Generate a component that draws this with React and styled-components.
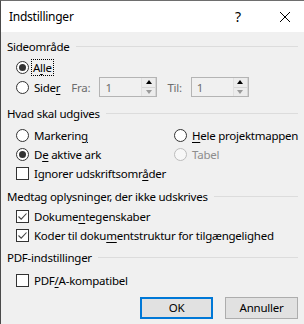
import React from "react";
import styled, { createGlobalStyle } from "styled-components";

const Global = createGlobalStyle`
  html, body { margin: 0; padding: 0; background: #f0f0f0; }
  body {
    font-family: "Noto Sans", "Open Sans", sans-serif;
    font-size: 11.5px;
    letter-spacing: -0.25px;
    color: #000;
  }
  * { box-sizing: border-box; }
`;

const Window = styled.div`
  width: 304px;
  height: 324px;
  border-top: 1px solid #6e6e6e;
  border-left: 1px solid #4a4a4a;
  background: #f0f0f0;
  display: flex;
  flex-direction: column;
  overflow: hidden;
`;

const TitleBar = styled.div`
  height: 31px;
  background: #fff;
  display: flex;
  align-items: center;
  padding-left: 8px;
  flex-shrink: 0;
`;

const Title = styled.div`
  flex: 1;
  font-size: 12px;
  line-height: 16px;
`;

const Help = styled.div`
  width: 14px;
  font-size: 14px;
  line-height: 16px;
  margin-right: 34px;
  text-align: center;
`;

const Close = styled.div`
  width: 12px;
  height: 12px;
  margin-right: 13px;
  display: flex;
`;

const Body = styled.div`
  display: flex;
  flex-direction: column;
  padding: 0 6px 0 6px;
`;

const Heading = styled.div`
  display: flex;
  align-items: center;
  height: 16px;
  margin-top: ${(p) => p.$mt}px;
  white-space: nowrap;
  line-height: 16px;
  &::after {
    content: "";
    flex: 1;
    height: 1px;
    background: #dcdcdc;
    margin-left: 6px;
    margin-top: -1px;
  }
`;

const Rows = styled.div`
  display: flex;
  flex-direction: column;
  padding-left: 9px;
  margin-top: ${(p) => p.$mt}px;
`;

const Row = styled.div`
  display: flex;
  align-items: center;
  height: ${(p) => p.$h || 19}px;
  white-space: nowrap;
`;

const Grid = styled.div`
  display: grid;
  grid-template-columns: 158px 1fr;
  grid-auto-rows: 19px;
  padding-left: 9px;
  margin-top: ${(p) => p.$mt}px;
`;

const Cell = styled.div`
  display: flex;
  align-items: center;
  white-space: nowrap;
  grid-column: ${(p) => (p.$span ? "1 / span 2" : "auto")};
`;

const RadioCircle = styled.span`
  width: 13px;
  height: 13px;
  border-radius: 50%;
  border: 1px solid ${(p) => (p.$disabled ? "#bcbcbc" : "#333")};
  background: ${(p) => (p.$disabled ? "#f7f7f7" : "#fff")};
  display: flex;
  align-items: center;
  justify-content: center;
  flex-shrink: 0;
  &::after {
    content: "";
    width: 7px;
    height: 7px;
    border-radius: 50%;
    background: #333;
    display: ${(p) => (p.$checked ? "block" : "none")};
  }
`;

const Box = styled.span`
  width: 13px;
  height: 13px;
  border: 1px solid #333;
  background: #fff;
  display: flex;
  align-items: center;
  justify-content: center;
  flex-shrink: 0;
`;

const Label = styled.span`
  margin-left: ${(p) => p.$ml ?? 4}px;
  line-height: 15px;
  color: ${(p) => (p.$disabled ? "#8d8d8d" : "#000")};
  padding: 0 1px;
  border: 1px ${(p) => (p.$focus ? "dotted #000" : "solid transparent")};
`;

const U = styled.span`
  text-decoration: underline;
  text-underline-offset: 2px;
`;

const Dim = styled.span`
  color: #6d6d6d;
  margin-left: ${(p) => p.$ml}px;
`;

const Spin = styled.div`
  width: 58px;
  height: 20px;
  margin-left: ${(p) => p.$ml}px;
  border: 1px solid #b4b4b4;
  background: #f0f0f0;
  display: flex;
`;

const SpinText = styled.div`
  flex: 1;
  color: #6d6d6d;
  padding-left: 5px;
  padding-top: 2px;
  line-height: 16px;
`;

const SpinButtons = styled.div`
  width: 15px;
  display: flex;
  flex-direction: column;
  border-left: 1px solid #e0e0e0;
`;

const SpinBtn = styled.div`
  flex: 1;
  display: flex;
  align-items: center;
  justify-content: center;
  background: #ececec;
  border-right: 1px solid #d6d6d6;
  &:first-child { border-bottom: 1px solid #d6d6d6; }
`;

const Arrow = styled.span`
  width: 0;
  height: 0;
  border-left: 3px solid transparent;
  border-right: 3px solid transparent;
  ${(p) =>
    p.$up ? "border-bottom: 4px solid #000;" : "border-top: 4px solid #9a9a9a;"}
`;

const Buttons = styled.div`
  display: flex;
  justify-content: flex-end;
  gap: 12px;
  margin-top: 7px;
`;

const Button = styled.div`
  width: 73px;
  height: 22px;
  background: #e1e1e1;
  border: ${(p) => (p.$primary ? "2px solid #0078d7" : "1px solid #adadad")};
  display: flex;
  align-items: center;
  justify-content: center;
  line-height: 16px;
`;

const Radio = ({ checked, disabled, children, focus }) => (
  <>
    <RadioCircle $checked={checked} $disabled={disabled} />
    <Label $disabled={disabled} $focus={focus} $ml={focus ? 2 : 3}>
      {children}
    </Label>
  </>
);

const Check = ({ checked, children }) => (
  <>
    <Box>
      {checked && (
        <svg width="11" height="11" viewBox="0 0 11 11">
          <path d="M1.5 5.5 L4.2 8.2 L9.5 2.5" fill="none" stroke="#444" strokeWidth="1.1" />
        </svg>
      )}
    </Box>
    <Label $ml={3}>{children}</Label>
  </>
);

const SpinBox = ({ ml }) => (
  <Spin $ml={ml}>
    <SpinText>1</SpinText>
    <SpinButtons>
      <SpinBtn><Arrow $up /></SpinBtn>
      <SpinBtn><Arrow /></SpinBtn>
    </SpinButtons>
  </Spin>
);

export default function App() {
  return (
    <>
      <Global />
      <Window>
        <TitleBar>
          <Title>Indstillinger</Title>
          <Help>?</Help>
          <Close>
            <svg width="12" height="12" viewBox="0 0 12 12">
              <path d="M1 1 L11 11 M11 1 L1 11" stroke="#000" strokeWidth="1" />
            </svg>
          </Close>
        </TitleBar>
        <Body>
          <Heading $mt={7}>Sideområde</Heading>
          <Rows $mt={2}>
            <Row $h={20}>
              <Radio checked focus>A<U>l</U>le</Radio>
            </Row>
            <Row $h={20}>
              <Radio>Side<U>r</U></Radio>
              <Dim $ml={9}>Fra:</Dim>
              <SpinBox ml={9} />
              <Dim $ml={10}>Til:</Dim>
              <SpinBox ml={9} />
            </Row>
          </Rows>
          <Heading $mt={9}>Hvad skal udgives</Heading>
          <Grid $mt={4}>
            <Cell><Radio>Markerin<U>g</U></Radio></Cell>
            <Cell><Radio><U>H</U>ele projektmappen</Radio></Cell>
            <Cell><Radio checked>D<U>e</U> aktive ark</Radio></Cell>
            <Cell><Radio disabled>Tabel</Radio></Cell>
            <Cell $span><Check>Ignorer udskriftsomr<U>å</U>der</Check></Cell>
          </Grid>
          <Heading $mt={6}>Medtag oplysninger, der ikke udskrives</Heading>
          <Rows $mt={2}>
            <Row><Check checked>Dokume<U>n</U>tegenskaber</Check></Row>
            <Row><Check checked>Koder til doku<U>m</U>entstruktur for tilgængelighed</Check></Row>
          </Rows>
          <Heading $mt={5}>PDF-indstillinger</Heading>
          <Rows $mt={5}>
            <Row><Check>PDF<U>/</U>A-kompatibel</Check></Row>
          </Rows>
          <Buttons>
            <Button $primary>OK</Button>
            <Button>Annuller</Button>
          </Buttons>
        </Body>
      </Window>
    </>
  );
}
